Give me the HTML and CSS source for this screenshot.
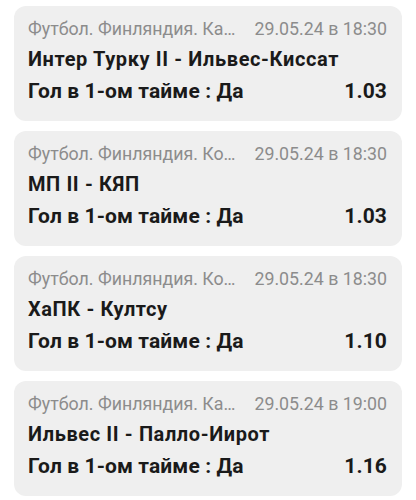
FILE: index.html
```html
<!DOCTYPE html>
<html lang="ru">
<head>
<meta charset="utf-8">
<link rel="stylesheet" href="styles.css">
</head>
<body>
<div class="list">
  <div class="card">
    <div class="meta"><span class="league">Футбол. Финляндия. Какконен</span><span class="date">29.05.24 в 18:30</span></div>
    <div class="match">Интер Турку II - Ильвес-Киссат</div>
    <div class="bet"><span>Гол в 1-ом тайме : Да</span><span>1.03</span></div>
  </div>
  <div class="card">
    <div class="meta"><span class="league">Футбол. Финляндия. Кольмонен</span><span class="date">29.05.24 в 18:30</span></div>
    <div class="match">МП II - КЯП</div>
    <div class="bet"><span>Гол в 1-ом тайме : Да</span><span>1.03</span></div>
  </div>
  <div class="card">
    <div class="meta"><span class="league">Футбол. Финляндия. Кольмонен</span><span class="date">29.05.24 в 18:30</span></div>
    <div class="match">ХаПК - Култсу</div>
    <div class="bet"><span>Гол в 1-ом тайме : Да</span><span>1.10</span></div>
  </div>
  <div class="card">
    <div class="meta"><span class="league">Футбол. Финляндия. Какконен</span><span class="date">29.05.24 в 19:00</span></div>
    <div class="match">Ильвес II - Палло-Иирот</div>
    <div class="bet"><span>Гол в 1-ом тайме : Да</span><span>1.16</span></div>
  </div>
</div>
</body>
</html>
```

FILE: styles.css
```css
html, body {
  margin: 0;
  padding: 0;
  background: #ffffff;
}
body {
  font-family: Roboto, "Noto Sans", sans-serif;
}
.list {
  display: flex;
  flex-direction: column;
  gap: 10px;
  padding: 6px 14px 0 14px;
}
.card {
  background: #efefef;
  border-radius: 12px;
  padding: 11px 15px 16px 14px;
  display: flex;
  flex-direction: column;
}
.meta {
  display: flex;
  gap: 16px;
  font-size: 17.8px;
  color: #8c8c8c;
  line-height: 24px;
  height: 24px;
}
.league {
  flex: 1;
  min-width: 0;
  white-space: nowrap;
  overflow: hidden;
  text-overflow: ellipsis;
}
.date {
  white-space: nowrap;
}
.match {
  margin-top: 4px;
  font-size: 20px;
  font-weight: 700;
  letter-spacing: 0.6px;
  color: #1a1a1a;
  line-height: 28px;
  height: 28px;
  white-space: nowrap;
}
.bet {
  margin-top: 4px;
  display: flex;
  justify-content: space-between;
  font-size: 21px;
  font-weight: 700;
  letter-spacing: 0.1px;
  color: #1a1a1a;
  line-height: 28px;
  height: 28px;
}
```
